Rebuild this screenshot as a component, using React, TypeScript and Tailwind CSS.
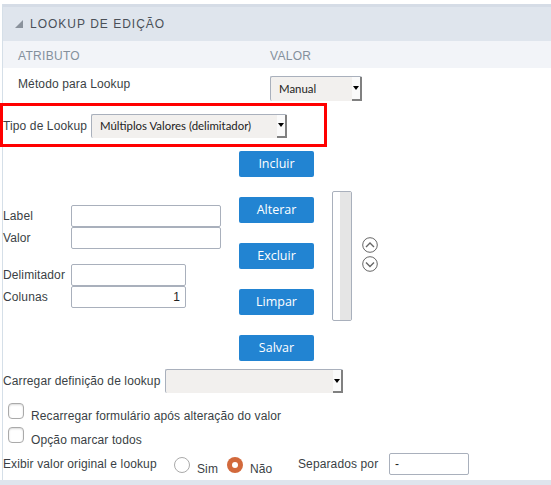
const labelText = "text-[12px] leading-[14px] tracking-[0.12px] text-[#3a3f45]";

function FakeSelect({ value, width, height = "h-[24px]" }: { value: string; width: string; height?: string }) {
  return (
    <div className={`${width} ${height} flex items-stretch rounded-[2px] border-l border-t border-[#a9b0bc] bg-[#f2f0ee]`}>
      <span className="flex-1 flex items-center pl-[8px] font-['Lato',sans-serif] text-[11.4px] text-[#222]">
        {value}
      </span>
      <span className="w-[10px] flex items-center justify-center bg-[#fafafa] border-r-2 border-b-2 border-[#808080]">
        <span className="border-x-[3px] border-t-[4px] border-x-transparent border-t-black" />
      </span>
    </div>
  );
}

function ActionButton({ label }: { label: string }) {
  return (
    <button className="w-[75px] h-[26px] rounded-[2px] bg-[#2284d2] text-white font-['Open_Sans',sans-serif] text-[12.5px]">
      {label}
    </button>
  );
}

function TextBox({ width, value, align }: { width: string; value?: string; align?: string }) {
  return (
    <div
      className={`${width} h-[22px] rounded-[2px] border border-[#a9b0bc] bg-white px-[5px] flex items-center text-[12px] text-[#222] ${align ?? ""}`}
    >
      {value}
    </div>
  );
}

function CircleArrow({ up }: { up?: boolean }) {
  return (
    <svg width="16" height="16" viewBox="0 0 16 16" fill="none" stroke="#666" className="block">
      <circle cx="8" cy="8" r="7.3" strokeWidth="1" />
      <path d={up ? "M4 10l4-4 4 4" : "M4 6.5l4 4 4-4"} strokeWidth="1.4" />
    </svg>
  );
}

function CheckRow({ label, top }: { label: string; top: string }) {
  return (
    <div className={`flex items-start pl-[5px] ${top}`}>
      <span className="w-[16px] h-[16px] rounded-[4px] border border-[#aaa] bg-white shadow-[inset_0_1px_2px_rgba(0,0,0,0.15)]" />
      <span className={`${labelText} ml-[7px] mt-[6px]`}>{label}</span>
    </div>
  );
}

export default function App() {
  return (
    <div className="relative w-[551px] h-[485px] overflow-hidden bg-white font-['Liberation_Sans',sans-serif]">
      <div className="pt-[4px] pl-[2px]">
        <div className="border-l border-[#d5dfe8] h-[481px] flex flex-col">
          <div className="h-[3px] bg-[#d5dce6]" />
          <div className="h-[34px] bg-[#dfe5ed] flex items-center pl-[12px]">
            <span className="border-l-[8px] border-b-[8px] border-l-transparent border-b-[#8a929c] mr-[7px]" />
            <span className="text-[12px] tracking-[1px] text-[#4a5058]">LOOKUP DE EDIÇÃO</span>
          </div>
          <div className="h-[27px] pt-[2px] bg-[#f2f4f8] flex items-center text-[12px] tracking-[0.3px] text-[#84909c]">
            <span className="w-[267px] pl-[15px]">ATRIBUTO</span>
            <span>VALOR</span>
          </div>

          <div className="flex h-[38px] pt-[8px]">
            <span className={`${labelText} w-[267px] pl-[15px] pt-[1px]`}>Método para Lookup</span>
            <FakeSelect value="Manual" width="w-[92px]" height="h-[25px]" />
          </div>

          <div className="flex items-center h-[25px] mt-[7px]">
            <span className={`${labelText} w-[88px]`}>Tipo de Lookup</span>
            <FakeSelect value="Múltiplos Valores (delimitador)" width="w-[196px]" />
          </div>

          <div className="flex mt-[13px]">
            <div className="w-[236px] pt-[54px]">
              <div className="flex items-center">
                <span className={`${labelText} w-[68px]`}>Label</span>
                <TextBox width="w-[150px]" />
              </div>
              <div className="flex items-center">
                <span className={`${labelText} w-[68px]`}>Valor</span>
                <TextBox width="w-[150px]" />
              </div>
              <div className="flex items-center mt-[15px]">
                <span className={`${labelText} w-[68px]`}>Delimitador</span>
                <TextBox width="w-[115px]" />
              </div>
              <div className="flex items-center">
                <span className={`${labelText} w-[68px]`}>Colunas</span>
                <TextBox width="w-[115px]" value="1" align="justify-end" />
              </div>
            </div>
            <div className="flex flex-col gap-[20px] w-[75px]">
              <ActionButton label="Incluir" />
              <ActionButton label="Alterar" />
              <ActionButton label="Excluir" />
              <ActionButton label="Limpar" />
              <ActionButton label="Salvar" />
            </div>
            <div className="ml-[18px] mt-[40px] w-[20px] h-[130px] rounded-[2px] border border-[#a9b0bc] flex justify-end bg-white">
              <div className="w-[11px] bg-[#e5e5e5]" />
            </div>
            <div className="ml-[10px] mt-[86px] flex flex-col gap-[3px]">
              <CircleArrow up />
              <CircleArrow />
            </div>
          </div>

          <div className="flex items-center mt-[8px] h-[24px]">
            <span className={`${labelText} w-[162px]`}>Carregar definição de lookup</span>
            <FakeSelect value="" width="w-[178px]" />
          </div>

          <CheckRow label="Recarregar formulário após alteração do valor" top="mt-[10px]" />
          <CheckRow label="Opção marcar todos" top="mt-[4px]" />

          <div className="flex items-center mt-[6px] h-[22px]">
            <span className={`${labelText} w-[171px]`}>Exibir valor original e lookup</span>
            <span className="w-[16px] h-[16px] rounded-full border border-[#aaa] bg-white mt-[2px]" />
            <span className={`${labelText} ml-[7px] w-[21px] mt-[10px]`}>Sim</span>
            <span className="ml-[9px] mt-[2px] w-[16px] h-[16px] rounded-full bg-[#d2693c] flex items-center justify-center">
              <span className="w-[6px] h-[6px] rounded-full bg-white" />
            </span>
            <span className={`${labelText} ml-[7px] w-[22px] mt-[10px]`}>Não</span>
            <span className={`${labelText} ml-[26px] w-[91px]`}>Separados por</span>
            <TextBox width="w-[80px]" value="-" />
          </div>
        </div>
      </div>
      <div className="absolute left-0 right-0 top-[480px] h-[5px] bg-[#dfe5ed]" />
      <div className="absolute left-0 top-[103px] w-[327px] h-[44px] border-[3px] border-[#f00]" />
    </div>
  );
}
